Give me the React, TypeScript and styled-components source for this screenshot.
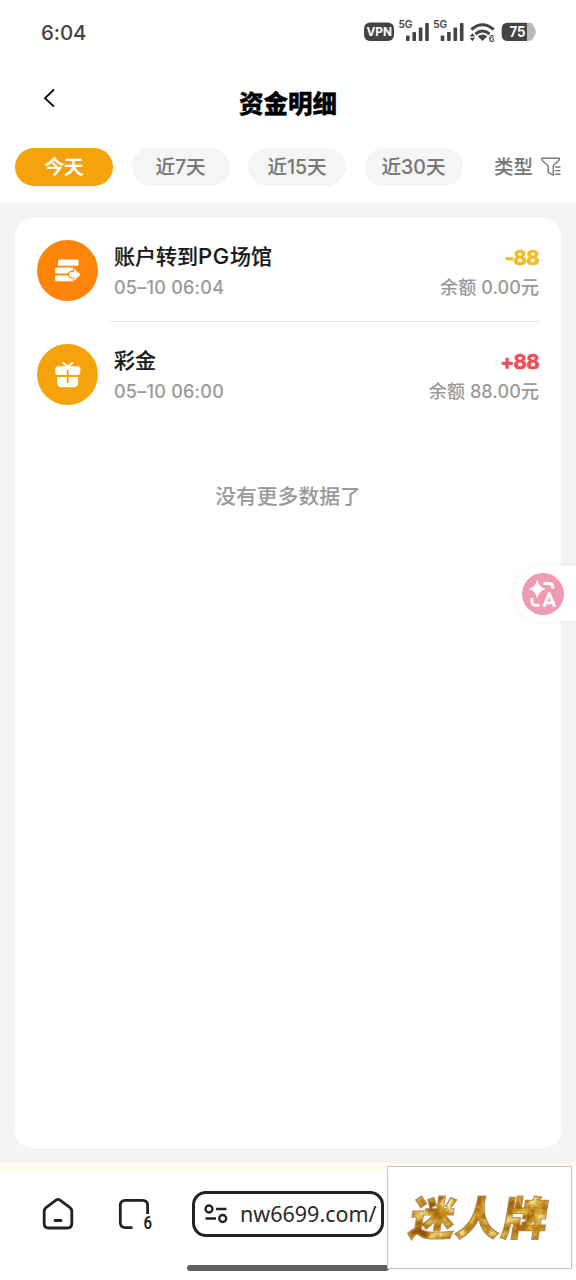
import React from 'react';
import styled, { createGlobalStyle } from 'styled-components';

const GlobalStyle = createGlobalStyle`
  * { box-sizing: border-box; }
  body {
    margin: 0;
    background: #fff;
    font-family: Inter, "Noto Sans CJK SC", sans-serif;
  }
`;

const Screen = styled.div`
  position: relative;
  width: 576px;
  height: 1280px;
  overflow: hidden;
  display: flex;
  flex-direction: column;
  background: #fff;
`;

const StatusBar = styled.div`
  height: 64px;
  padding: 0 39px 0 41px;
  display: flex;
  align-items: center;
  justify-content: space-between;
`;

const Clock = styled.span`
  padding-top: 2px;
  font-size: 20.5px;
  font-weight: 500;
  line-height: 24px;
  letter-spacing: -0.1px;
  color: #444;
`;

const TitleBar = styled.header`
  height: 84px;
  display: grid;
  grid-template-columns: 100px 1fr 100px;
  align-items: center;
`;

const BackButton = styled.button`
  padding: 0 0 16px 42px;
  border: 0;
  background: none;
  display: flex;
`;

const PageTitle = styled.h1`
  margin: 0;
  padding-bottom: 4px;
  text-align: center;
  font-size: 24.5px;
  line-height: 30px;
  font-weight: 900;
  color: #000;
  -webkit-text-stroke: 0.3px #000;
`;

const FilterBar = styled.nav`
  height: 55px;
  padding: 0 15px;
  display: flex;
  align-items: flex-start;
  gap: 18.5px;
`;

const Pill = styled.button<{ $active?: boolean }>`
  width: 98px;
  height: 38px;
  padding: 1px 0 0;
  border: 0;
  border-radius: 19px;
  font: 500 19.5px/37px Inter, "Noto Sans CJK SC", sans-serif;
  background: ${p => (p.$active ? '#f5a30a' : '#f5f5f5')};
  color: ${p => (p.$active ? '#fff' : '#777')};
  -webkit-text-stroke: ${p => (p.$active ? '0.4px' : '0.1px')} currentColor;
`;

const TypeFilter = styled.div`
  margin-left: auto;
  height: 38px;
  display: flex;
  align-items: center;
  gap: 8px;
  font-size: 19.5px;
  line-height: 36px;
  font-weight: 500;
  white-space: nowrap;
  color: #777;
`;

const Content = styled.main`
  height: 960px;
  padding: 15px;
  background: #f4f4f4;
`;

const Card = styled.section`
  height: 930px;
  padding: 0 22px;
  border-radius: 18px;
  background: #fff;
`;

const Row = styled.article`
  height: 104.5px;
  display: flex;
  align-items: center;
  gap: 12px;
`;

const Badge = styled.div<{ $color: string }>`
  width: 61px;
  height: 61px;
  flex: none;
  border-radius: 50%;
  background: ${p => p.$color};
  display: flex;
`;

const RowBody = styled.div<{ $divided?: boolean }>`
  flex: 1;
  height: 104px;
  align-self: flex-start;
  padding: 22.5px 0 0 4px;
  display: flex;
  justify-content: space-between;
  border-bottom: 1px solid ${p => (p.$divided ? '#e6e6e6' : 'transparent')};
`;

const Lines = styled.div<{ $right?: boolean }>`
  display: flex;
  flex-direction: column;
  gap: 2px;
  text-align: ${p => (p.$right ? 'right' : 'left')};
`;

const Name = styled.div`
  font-size: 21px;
  line-height: 32px;
  height: 32px;
  font-weight: 500;
  color: #1a1a1a;
  -webkit-text-stroke: 0.2px currentColor;
`;

const Latin = styled.span`
  font-size: 22px;
  line-height: 1;
  letter-spacing: 0.7px;
`;

const Meta = styled.div<{ $spacing?: string }>`
  font-size: 18px;
  line-height: 26px;
  font-weight: 500;
  letter-spacing: ${p => p.$spacing ?? '0'};
  color: #999;
`;

const Amount = styled.div<{ $color: string }>`
  font-size: 20.5px;
  line-height: 34px;
  height: 32px;
  font-weight: 700;
  letter-spacing: -0.7px;
  padding-right: 0.2px;
  color: ${p => p.$color};
  -webkit-text-stroke: 0.7px currentColor;
`;

const EndNote = styled.p`
  margin: 54.5px 0 0;
  text-align: center;
  font-size: 20.8px;
  line-height: 30px;
  font-weight: 500;
  color: #999;
`;

const BrowserBar = styled.footer`
  height: 117px;
  border-top: 10px solid #fffbef;
  padding: 18px 0 0 42px;
  display: flex;
  align-items: flex-start;
`;

const BarIcon = styled.div<{ $gap: number }>`
  width: 36px;
  height: 46px;
  flex: none;
  margin-right: ${p => p.$gap}px;
`;

const AddressBox = styled.div`
  width: 192px;
  height: 46px;
  flex: none;
  border: 3px solid #222;
  border-radius: 14px;
  padding-left: 9px;
  display: flex;
  align-items: center;
  gap: 11px;
  font: 400 21.5px/30px "Noto Sans", sans-serif;
  color: #2a2a2a;
`;

const GestureBar = styled.div`
  position: absolute;
  left: 187px;
  top: 1265px;
  width: 202px;
  height: 6px;
  border-radius: 3px;
  background: #606060;
`;

const TranslateTab = styled.div`
  position: absolute;
  right: 0;
  top: 566px;
  width: 62px;
  height: 55px;
  padding: 7px 8px;
  border-radius: 28px 0 0 28px;
  background: #fff;
  box-shadow: 0 0 10px rgba(0, 0, 0, 0.05);
`;

const Watermark = styled.div`
  position: absolute;
  left: 387px;
  top: 1166px;
  width: 185px;
  height: 103px;
  border: 1px solid #c4c4c4;
  background: #fff;
`;

const StatusIcons = () => (
  <svg width="176" height="28" viewBox="361 18 176 28" fontFamily="Inter, sans-serif" fill="#444">
    <rect x="364" y="22.5" width="30" height="18.5" rx="6" />
    <text x="366.5" y="36.3" fontSize="12.3" fontWeight="700" fill="#fff" textLength="25.5" lengthAdjust="spacingAndGlyphs">VPN</text>
    {[0, 34.7].map(dx => (
      <g key={dx} transform={`translate(${dx} 0)`}>
        <text x="398.5" y="28" fontSize="10.2" fontWeight="600" textLength="14">5G</text>
        <rect x="406" y="35.5" width="3.6" height="5.5" rx=".8" />
        <rect x="412.4" y="32" width="3.6" height="9" rx=".8" />
        <rect x="418.8" y="27.5" width="3.6" height="13.5" rx=".8" />
        <rect x="425.2" y="23" width="3.6" height="18" rx=".8" />
      </g>
    ))}
    <g fill="none" stroke="#444" strokeWidth="3">
      <path d="M471.3 29.5Q482.5 20 493.7 29.5" />
      <path d="M475.5 34Q482.5 28 489.5 34" />
    </g>
    <path d="M477.7 36.2Q482.5 33 487.3 36.2L482.5 41Z" />
    <path d="M472.4 33.2l2.7 3.4h-5.4zM472.4 41.2l2.7-3.4h-5.4z" />
    <text x="488.7" y="41.6" fontSize="8.8" fontWeight="600">6</text>
    <path d="M527 22.8h3q2 0 3 2l2.2 4q1.3 3 0 6l-2.2 4q-1 2-3 2h-3z" fill="#b9b9b9" />
    <path d="M508 22.8h19v18.2h-19q-6.3 0-6.3-6v-6.2q0-6 6.3-6z" />
    <text x="509.5" y="37.4" fontSize="14.5" fontWeight="700" fill="#fff" textLength="16" lengthAdjust="spacingAndGlyphs">75</text>
  </svg>
);

const FunnelIcon = () => (
  <svg width="20" height="20" viewBox="0 0 20 20" fill="none" stroke="#777" strokeWidth="1.4" strokeLinejoin="round" strokeLinecap="round">
    <path d="M1 1.2H18.2Q18.8 3 17 4.4L12.3 8.5V18.2L7.2 15.4V8.7L2 4.3Q.6 3 1 1.2Z" />
    <path d="M14.5 10H19M14.5 13.6H19M14.5 17.2H19" />
  </svg>
);

const TransferIcon = () => (
  <svg width="61" height="61" viewBox="0 0 61 61" fill="#fff">
    <rect x="21" y="19.5" width="20.5" height="6.3" rx="1.3" />
    <path d="M19.5 27.5H36.5V30Q31.5 31.5 30.5 33.5H19.5Q18.2 33.5 18.2 32.2V28.8Q18.2 27.5 19.5 27.5Z" />
    <path d="M19.5 35.2H32Q33 37.4 37.2 38.2V41.2H19.5Q18.2 41.2 18.2 40V36.5Q18.2 35.2 19.5 35.2Z" />
    <path d="M32.5 33Q33.2 32.3 37.2 32.3V29.2L43.2 34.6L37.2 40.2V37.2Q33.2 37.2 32.5 36.4Z" stroke="#ff8409" strokeWidth="2.6" strokeLinejoin="round" />
    <path d="M32.5 33Q33.2 32.3 37.2 32.3V29.2L43.2 34.6L37.2 40.2V37.2Q33.2 37.2 32.5 36.4Z" stroke="#fff" strokeWidth=".6" strokeLinejoin="round" />
  </svg>
);

const GiftIcon = () => (
  <svg width="61" height="61" viewBox="0 0 61 61" fill="#fff">
    <path d="M26.2 19L30.7 22.5L35.5 19" fill="none" stroke="#fff" strokeWidth="2" strokeLinecap="round" strokeLinejoin="round" />
    <rect x="18.3" y="22.3" width="25" height="8.6" rx="2.5" />
    <path d="M20.2 33H41.2V38.5Q41.2 43.3 36.5 43.3H25Q20.2 43.3 20.2 38.5Z" />
    <path d="M30.7 26V39" stroke="#f5a30a" strokeWidth="1.8" />
  </svg>
);

const TranslateIcon = () => (
  <svg width="42" height="42" viewBox="0 0 42 42">
    <circle cx="21" cy="21" r="21" fill="#ef9bb3" />
    <path d="M15.2 7.5Q16.8 14.4 22.8 16Q16.8 17.6 15.2 24.5Q13.6 17.6 7.6 16Q13.6 14.4 15.2 7.5Z" fill="#fff" stroke="#fff" strokeWidth=".8" />
    <g fill="none" stroke="#fff" strokeWidth="2.8">
      <path d="M21.5 10.5H26.5Q30.8 10.5 30.8 14.5V16" />
      <path d="M10 25V28.3Q10 32.3 14 32.3H17.5" />
    </g>
    <path d="M21.8 33.8L27.2 20.5L32.8 33.8M23.8 29.8H30.8" fill="none" stroke="#fff" strokeWidth="3" strokeLinejoin="round" />
  </svg>
);

const WatermarkArt = () => (
  <svg width="183" height="101" viewBox="388 1167 183 101">
    <defs>
      <filter id="foil" x="0" y="0" width="1" height="1" colorInterpolationFilters="sRGB">
        <feTurbulence type="fractalNoise" baseFrequency="0.07 0.08" numOctaves="3" seed="8" />
        <feColorMatrix values="1 0 0 0 0  1 0 0 0 0  1 0 0 0 0  0 0 0 0 1" />
        <feComponentTransfer result="gold">
          <feFuncR type="table" tableValues=".5 .52 .6 .69 .79 .88 .96 1 1" />
          <feFuncG type="table" tableValues=".25 .28 .36 .46 .58 .72 .87 .95 .95" />
          <feFuncB type="table" tableValues=".02 .02 .03 .06 .13 .3 .58 .72 .72" />
        </feComponentTransfer>
        <feMorphology in="SourceAlpha" operator="erode" radius="0.5" result="inner" />
        <feFlood floodColor="#946321" floodOpacity="0.75" />
        <feComposite in2="SourceAlpha" operator="in" result="edge" />
        <feComposite in="gold" in2="inner" operator="in" result="face" />
        <feMerge>
          <feMergeNode in="edge" />
          <feMergeNode in="face" />
        </feMerge>
      </filter>
    </defs>
    <g filter="url(#foil)">
      <text
        transform="translate(407.5 1234.5) skewX(-9)"
        fontFamily='"Noto Sans CJK SC", sans-serif'
        fontWeight="900"
        fontSize="45.5"
        textLength="138"
        fill="#c8912a"
        stroke="#a8772a"
        strokeWidth="1.2"
      >迷人牌</text>
    </g>
  </svg>
);

const records = [
  { name: <>账户转到<Latin>PG</Latin>场馆</>, time: '05–10 06:04', amount: '-88', tint: '#f0bd22', balance: '余额 0.00元', color: '#ff8409', icon: <TransferIcon /> },
  { name: '彩金', time: '05–10 06:00', amount: '+88', tint: '#e9505a', balance: '余额 88.00元', color: '#f5a30a', icon: <GiftIcon /> },
];

export default function App() {
  return (
    <Screen>
      <GlobalStyle />
      <StatusBar>
        <Clock>6:04</Clock>
        <StatusIcons />
      </StatusBar>
      <TitleBar>
        <BackButton aria-label="返回">
          <svg width="14" height="20" viewBox="0 0 14 20" fill="none" stroke="#000" strokeWidth="1.8">
            <path d="M12 1.5L3 10.2L12 18.7" />
          </svg>
        </BackButton>
        <PageTitle>资金明细</PageTitle>
      </TitleBar>
      <FilterBar>
        {['今天', '近7天', '近15天', '近30天'].map((label, i) => (
          <Pill key={label} $active={i === 0}>{label}</Pill>
        ))}
        <TypeFilter>类型<FunnelIcon /></TypeFilter>
      </FilterBar>
      <Content>
        <Card>
          {records.map((r, i) => (
            <Row key={r.time}>
              <Badge $color={r.color}>{r.icon}</Badge>
              <RowBody $divided={i === 0}>
                <Lines>
                  <Name>{r.name}</Name>
                  <Meta $spacing="0.25px">{r.time}</Meta>
                </Lines>
                <Lines $right>
                  <Amount $color={r.tint}>{r.amount}</Amount>
                  <Meta $spacing="0.1px">{r.balance}</Meta>
                </Lines>
              </RowBody>
            </Row>
          ))}
          <EndNote>没有更多数据了</EndNote>
        </Card>
      </Content>
      <BrowserBar>
        <BarIcon $gap={40}>
          <svg width="32" height="46" viewBox="42 1191 32 46" fill="none" stroke="#222" strokeWidth="2.8" strokeLinecap="round" strokeLinejoin="round">
            <path d="M56 1200.2Q58 1198.6 60 1200.2L70 1207.6Q71.8 1209 71.8 1211.5V1223.5Q71.8 1228 67.3 1228H48.7Q44.2 1228 44.2 1223.5V1211.5Q44.2 1209 46 1207.6Z" />
            <path d="M55 1220.5H61" />
          </svg>
        </BarIcon>
        <BarIcon $gap={38}>
          <svg width="36" height="46" viewBox="118 1191 36 46" fill="none" stroke="#222" strokeWidth="2.8">
            <path d="M132.5 1227.6H125.5Q120.3 1227.6 120.3 1222.5V1205.5Q120.3 1200.4 125.5 1200.4H142.5Q147.6 1200.4 147.6 1205.5V1214" />
            <text x="143.5" y="1229.3" fontFamily="Roboto, sans-serif" fontWeight="600" fontSize="17.5" fill="#222" stroke="none" textLength="8.5" lengthAdjust="spacingAndGlyphs">6</text>
          </svg>
        </BarIcon>
        <AddressBox>
          <svg width="25" height="20" viewBox="0 0 25 20" fill="none" stroke="#222" strokeWidth="2.3">
            <circle cx="5" cy="5" r="3.5" />
            <circle cx="18.7" cy="14.5" r="3.5" />
            <path d="M12 5H22.5M1.5 14.5H12" />
          </svg>
          <span>nw6699.com/</span>
        </AddressBox>
      </BrowserBar>
      <GestureBar />
      <TranslateTab><TranslateIcon /></TranslateTab>
      <Watermark><WatermarkArt /></Watermark>
    </Screen>
  );
}
